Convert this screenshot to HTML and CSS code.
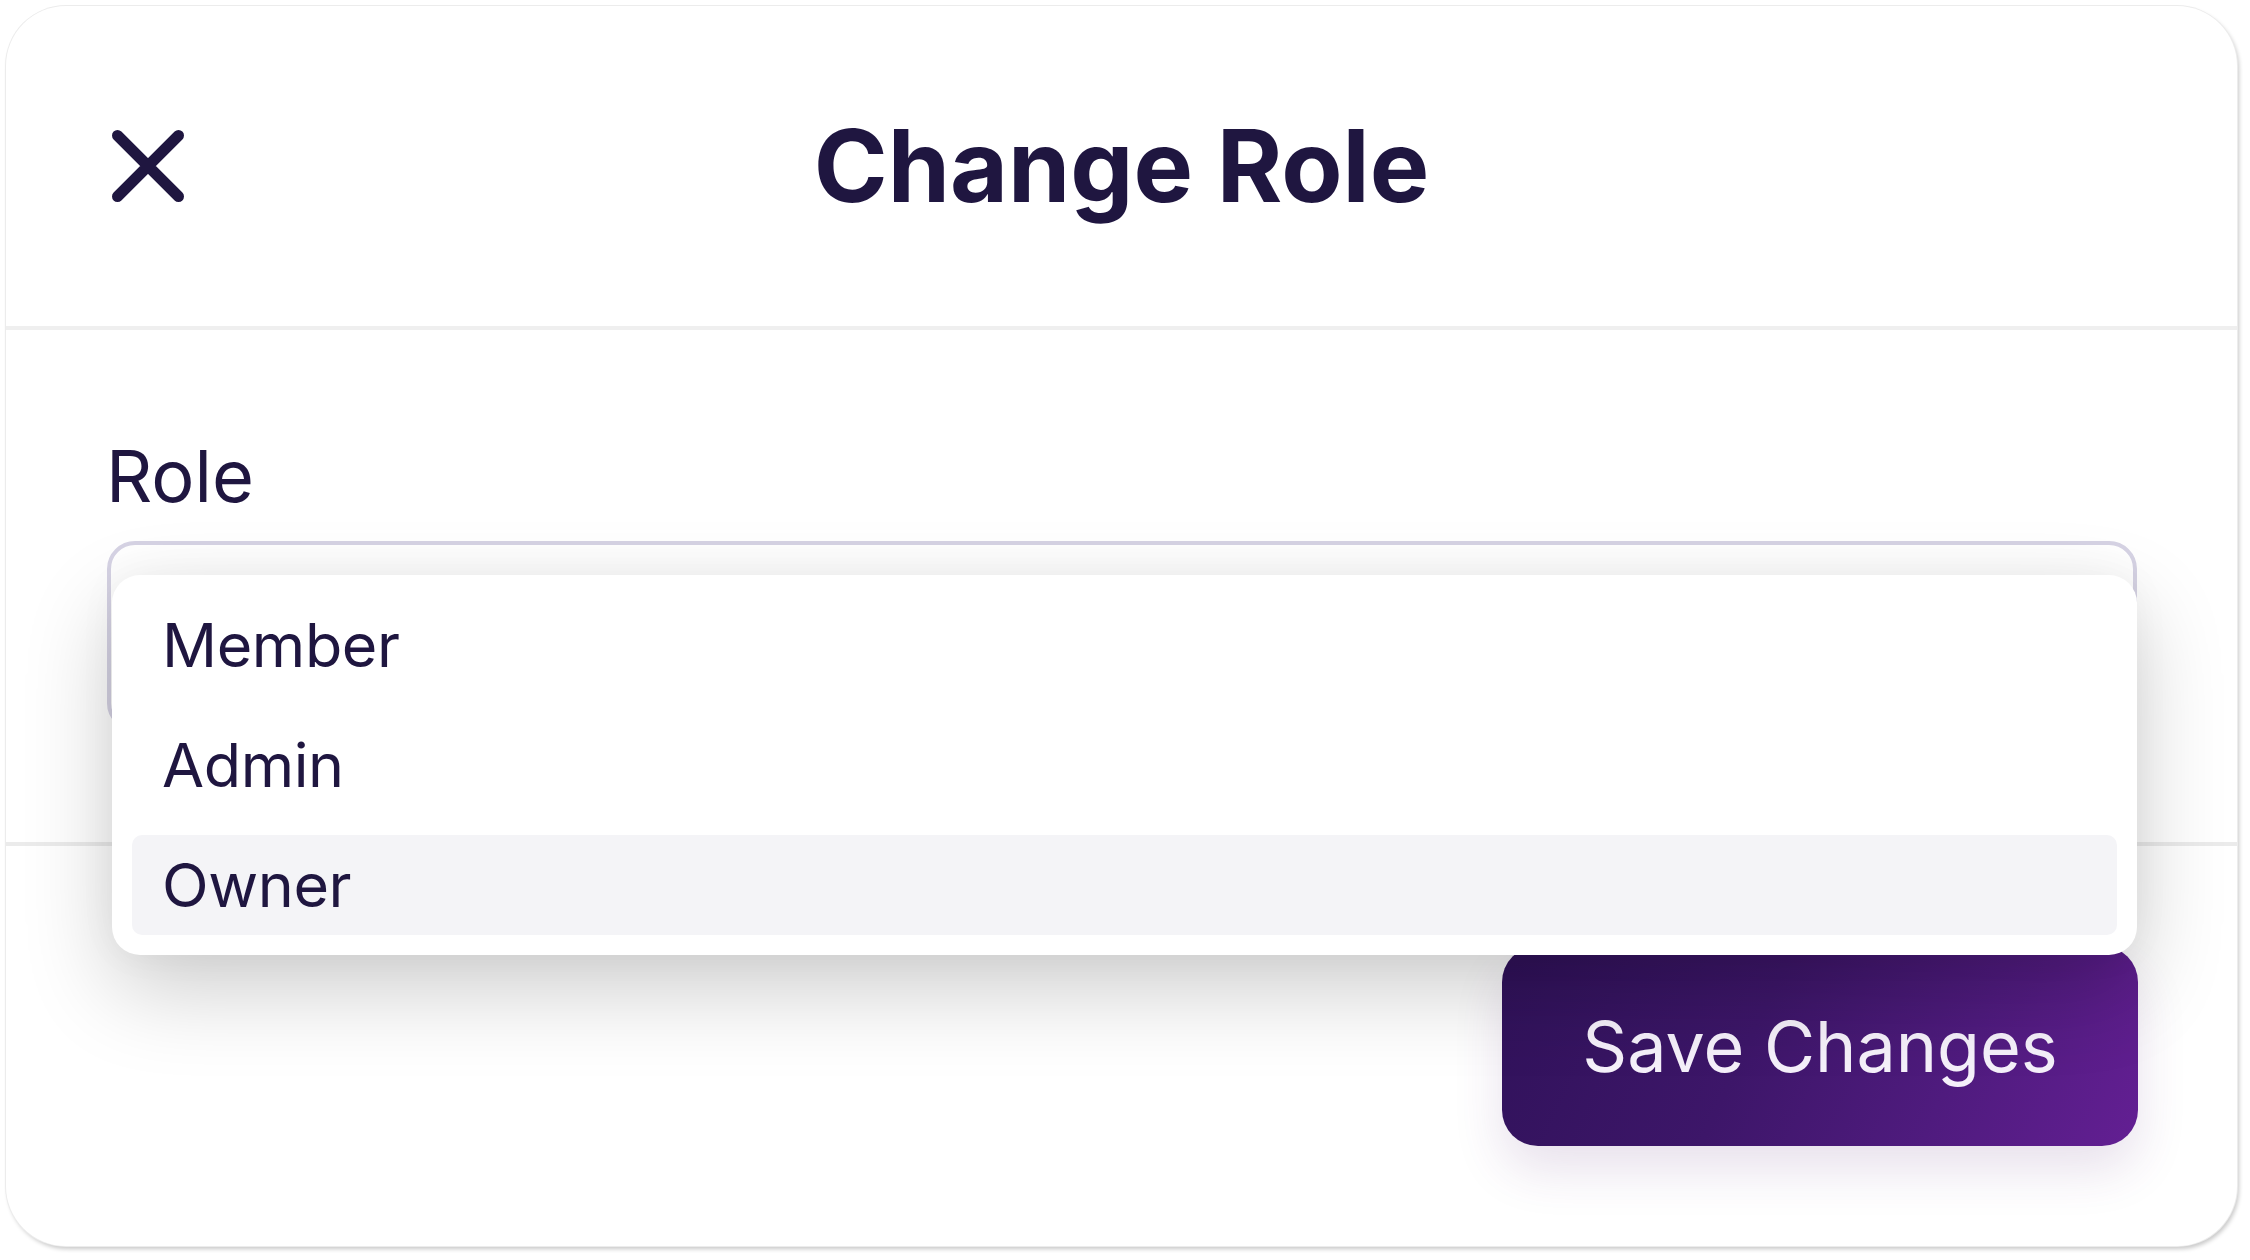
FILE: index.html
```html
<!DOCTYPE html>
<html lang="en">
<head>
<meta charset="utf-8">
<title>Change Role</title>
<link rel="stylesheet" href="styles.css">
</head>
<body>
<div class="card">
  <header class="card-header">
    <button class="close-btn" aria-label="Close">
      <svg width="72" height="72" viewBox="0 0 72 72" fill="none">
        <path d="M5.5 5.5 L66.5 66.5 M66.5 5.5 L5.5 66.5" stroke="#1f1640" stroke-width="11" stroke-linecap="round"/>
      </svg>
    </button>
    <h1 class="title">Change Role</h1>
    <span class="spacer"></span>
  </header>
  <section class="card-body">
    <label class="field-label">Role</label>
    <div class="select"></div>
  </section>
  <footer class="card-footer">
    <button class="save-btn">Save Changes</button>
  </footer>
  <ul class="dropdown">
    <li class="option">Member</li>
    <li class="option">Admin</li>
    <li class="option option-active">Owner</li>
  </ul>
</div>
</body>
</html>
```

FILE: styles.css
```css
html, body {
  margin: 0;
  padding: 0;
  background: #ffffff;
}
body {
  width: 2250px;
  height: 1260px;
  font-family: Inter, "Noto Sans", sans-serif;
  color: #1f1640;
  overflow: hidden;
}
.card {
  position: relative;
  margin: 6px 0 0 6px;
  width: 2231px;
  height: 1240px;
  border-radius: 60px;
  background: #ffffff;
  box-shadow: 0 0 0 1px #ececec, 2px 3px 4px rgba(0, 0, 0, 0.22);
  overflow: hidden;
  display: flex;
  flex-direction: column;
}
.card-header {
  height: 320px;
  flex: none;
  padding: 0 106px;
  display: grid;
  grid-template-columns: 1fr auto 1fr;
  align-items: center;
  border-bottom: 4px solid #efefef;
}
.close-btn {
  width: 72px;
  height: 72px;
  padding: 0;
  border: 0;
  background: none;
  display: flex;
  justify-self: start;
}
.title {
  margin: 0;
  font-size: 100px;
  font-weight: 700;
  line-height: 1;
  color: #1f1640;
  letter-spacing: 0;
}
.card-body {
  flex: none;
  padding: 102px 100px 111px;
  display: flex;
  flex-direction: column;
  border-bottom: 4px solid #ebebeb;
}
.field-label {
  font-size: 72px;
  line-height: 87px;
  margin-bottom: 22px;
}
.select {
  height: 190px;
  box-sizing: border-box;
  border: 4px solid #d6d3e4;
  border-radius: 28px;
  margin-left: 1px;
}
.card-footer {
  flex: none;
  padding: 100px 100px;
  display: flex;
  justify-content: flex-end;
}
.save-btn {
  width: 636px;
  height: 200px;
  border: 0;
  border-radius: 36px;
  background: linear-gradient(115deg, #30125a 0%, #3d1669 40%, #4f1b7e 70%, #631f93 100%);
  color: #f5f0fa;
  font-family: Inter, "Noto Sans", sans-serif;
  font-size: 70px;
  font-weight: 400;
  box-shadow: 0 24px 50px rgba(90, 40, 120, 0.14);
  margin-right: -1px;
}
.dropdown {
  position: absolute;
  top: 569px;
  left: 106px;
  width: 2025px;
  box-sizing: border-box;
  margin: 0;
  padding: 20px;
  list-style: none;
  background: #ffffff;
  border-radius: 28px;
  display: flex;
  flex-direction: column;
  gap: 20px;
  box-shadow: 0 34px 90px rgba(0, 0, 0, 0.2), 0 0 40px rgba(0, 0, 0, 0.04);
}
.option {
  height: 100px;
  line-height: 100px;
  padding-left: 30px;
  font-size: 61px;
  letter-spacing: -0.4px;
  border-radius: 10px;
  color: #1f1640;
}
.option-active {
  background: #f4f4f7;
}
```
